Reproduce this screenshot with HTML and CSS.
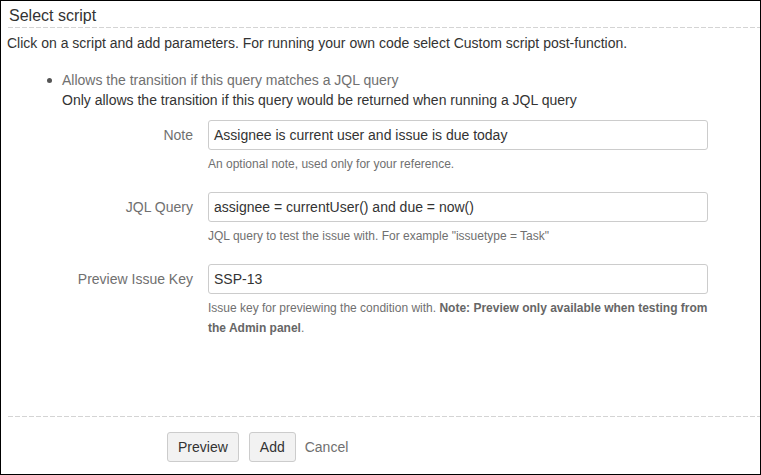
FILE: index.html
```html
<!DOCTYPE html>
<html lang="en">
<head>
<meta charset="utf-8">
<title>Select script</title>
<link rel="stylesheet" href="styles.css">
</head>
<body>
<div class="frame">
  <div class="content">
    <h2 class="title">Select script</h2>
    <p class="intro">Click on a script and add parameters. For running your own code select Custom script post-function.</p>
    <ul class="scripts">
      <li>
        <span class="script-name">Allows the transition if this query matches a JQL query</span>
        <span class="script-desc">Only allows the transition if this query would be returned when running a JQL query</span>
      </li>
    </ul>
    <div class="form">
      <div class="row">
        <label class="label">Note</label>
        <div class="field">
          <div class="input">Assignee is current user and issue is due today</div>
          <div class="help">An optional note, used only for your reference.</div>
        </div>
      </div>
      <div class="row">
        <label class="label">JQL Query</label>
        <div class="field">
          <div class="input">assignee = currentUser() and due = now()</div>
          <div class="help">JQL query to test the issue with. For example "issuetype = Task"</div>
        </div>
      </div>
      <div class="row">
        <label class="label">Preview Issue Key</label>
        <div class="field">
          <div class="input">SSP-13</div>
          <div class="help">Issue key for previewing the condition with. <b>Note: Preview only available when testing from the Admin panel</b>.</div>
        </div>
      </div>
    </div>
  </div>
  <div class="footer">
    <button class="btn">Preview</button>
    <button class="btn">Add</button>
    <span class="cancel">Cancel</span>
  </div>
</div>
</body>
</html>
```
FILE: styles.css
```css
* { box-sizing: border-box; }
html, body { margin: 0; padding: 0; background: #fff; }
body {
  font-family: "Liberation Sans", Arial, sans-serif;
  color: #333;
  font-size: 14px;
}
.frame {
  width: 761px;
  height: 475px;
  border: 1px solid #000;
  display: flex;
  flex-direction: column;
  overflow: hidden;
}
.content { flex: 1; }
.title {
  margin: 0 0 0 7px;
  padding: 6px 0 3px 1px;
  font-size: 16px;
  font-weight: normal;
  line-height: 18px;
  color: #333;
  background-image: repeating-linear-gradient(to right, #d4d4d4 0 5px, transparent 5px 7px);
  background-size: 100% 1px;
  background-repeat: no-repeat;
  background-position: left bottom;
}
.intro {
  margin: 5px 0 0 6px;
  line-height: 20px;
}
.scripts {
  margin: 17px 0 0 0;
  padding-left: 61px;
  list-style: none;
  line-height: 20px;
}
.scripts li { position: relative; }
.scripts li::before {
  content: "";
  position: absolute;
  left: -15px;
  top: 8px;
  width: 5px;
  height: 5px;
  border-radius: 50%;
  background: #555;
}
.script-name { display: block; color: #707070; }
.script-desc { display: block; color: #333; }
.form { margin-top: 10px; padding-left: 6px; }
.row {
  display: grid;
  grid-template-columns: 186px 500px;
  column-gap: 15px;
  margin-bottom: 18px;
}
.label {
  text-align: right;
  line-height: 30px;
  color: #707070;
}
.input {
  height: 30px;
  border: 1px solid #ccc;
  border-radius: 3px;
  padding: 0 5px;
  line-height: 28px;
  color: #333;
}
.help {
  margin-top: 4px;
  font-size: 12px;
  line-height: 20px;
  color: #707070;
}
.help b { font-weight: bold; color: #666; }
.footer {
  margin-left: 7px;
  padding: 16px 0 12px 159px;
  display: flex;
  align-items: center;
  gap: 10px;
  background-image: repeating-linear-gradient(to right, #d4d4d4 0 5px, transparent 5px 7px);
  background-size: 100% 1px;
  background-repeat: no-repeat;
  background-position: left top;
}
.btn {
  height: 30px;
  padding: 0 10px;
  font-family: inherit;
  font-size: 14px;
  color: #333;
  background: #f2f2f2;
  border: 1px solid #ccc;
  border-radius: 3px;
}
.cancel {
  color: #707070;
  margin-left: -1px;
}
```
